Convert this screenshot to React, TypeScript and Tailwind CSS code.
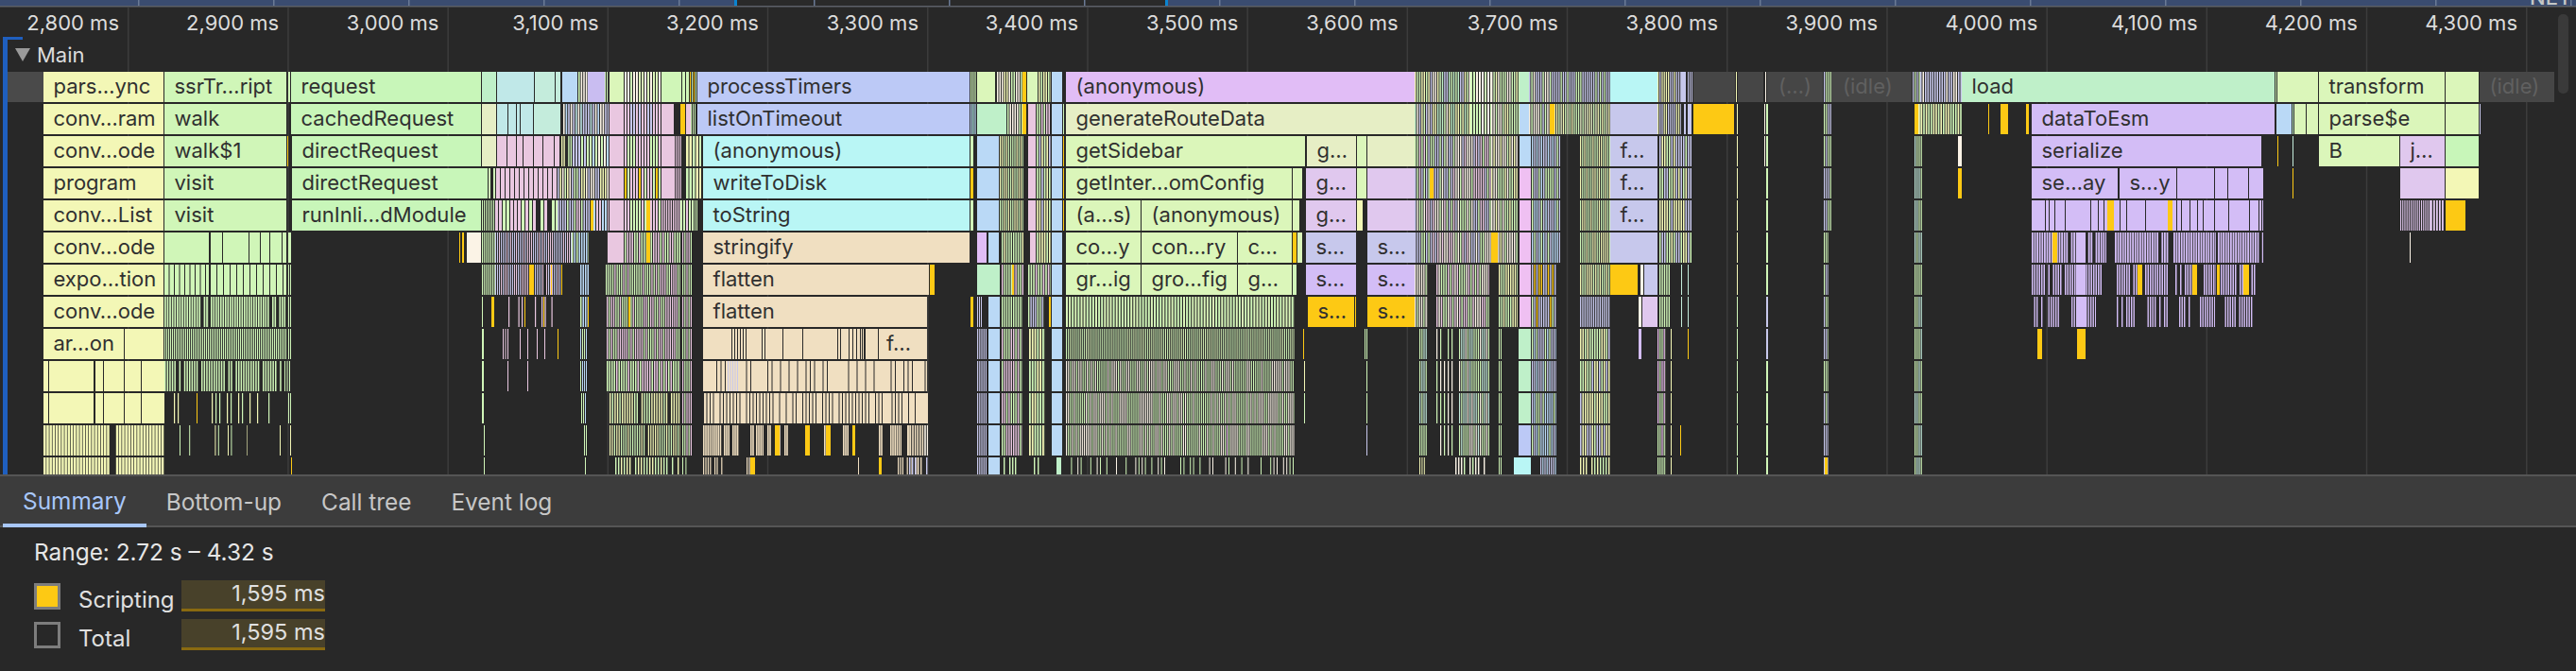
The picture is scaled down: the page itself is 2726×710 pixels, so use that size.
import type { ReactElement } from 'react';

const D = '#2a2a2a';
const Y = '#f3f7b6';
const G = '#d0f6b8';
const GL = '#dbf6ba';
const R = '#c8f6b9';
const M = '#bff0c9';
const T = '#c4ecdc';
const TB = '#c0e8e8';
const B = '#bad9f6';
const L = '#c7c8ec';
const LV = '#c9bdf1';
const P = '#e9c7e0';
const PK = '#efc0f2';
const W = '#fbf3e6';
const O = '#f0dfc1';
const C = '#b9f6f5';
const PB = '#bcc9f6';
const PP = '#e1bdf6';
const OL = '#e6eec5';
const V = '#d3bdf6';
const VL = '#e0c8ee';
const A = '#fdc914';
const IDLE = '#464646';

const ROW_H = 32;
const rowY = (i: number) => 76 + i * 34;
const GRID = Array.from({ length: 16 }, (_, i) => 135 + 169.2 * i);
const TIMES = ['2,800', '2,900', '3,000', '3,100', '3,200', '3,300', '3,400', '3,500', '3,600', '3,700', '3,800', '3,900', '4,000', '4,100', '4,200', '4,300'];

// small seeded generator so the hatching stays the same on every load
let seed = 1337;
function rnd() {
  seed = (seed + 0x6d2b79f5) | 0;
  let t = Math.imul(seed ^ (seed >>> 15), 1 | seed);
  t = (t + Math.imul(t ^ (t >>> 7), 61 | t)) ^ t;
  return ((t ^ (t >>> 14)) >>> 0) / 4294967296;
}

type Bar = { x: number; w: number; c: string };
type Label = { x: number; t: string; c?: string };
type Row = { bars: Bar[]; labels: Label[] };

const rows: Row[] = Array.from({ length: 13 }, () => ({ bars: [], labels: [] }));

// solid block, optionally labelled
function s(r: number, x0: number, x1: number, c: string, t?: string, tc?: string) {
  rows[r].bars.push({ x: x0, w: x1 - x0, c });
  if (t) rows[r].labels.push({ x: x0 + 10.5, t, c: tc });
}

// run of thin slices
function h(r: number, x0: number, x1: number, pal: string[], pitch = 3, density = 1, w = pitch - 1) {
  for (let x = x0; x < x1; x += pitch) {
    const c = pal[Math.floor(rnd() * pal.length)];
    if (rnd() < density) rows[r].bars.push({ x, w: Math.min(w, x1 - x), c });
  }
}

function many(from: number, to: number, fn: (r: number) => void) {
  for (let r = from; r <= to; r++) fn(r);
}

// --- yellow column
s(0, 46, 173, Y, 'pars…ync');
s(1, 46, 173, Y, 'conv…ram');
s(2, 46, 173, Y, 'conv…ode');
s(3, 46, 173, Y, 'program');
s(4, 46, 173, Y, 'conv…List');
s(5, 46, 173, Y, 'conv…ode');
s(6, 46, 173, Y, 'expo…tion');
s(7, 46, 173, Y, 'conv…ode');
s(8, 46, 131, Y, 'ar…on');
s(8, 132, 173, Y);
many(9, 10, r => {
  s(r, 46, 51, Y);
  s(r, 52, 99, Y);
  s(r, 101, 109, Y);
  s(r, 110, 131, Y);
  s(r, 132, 149, Y);
  s(r, 150, 174, Y);
});
many(11, 12, r => {
  seed = 77;
  h(r, 46, 174, [Y], 3.2, 0.9, 2.5);
});

// --- green column
s(0, 174, 303, G, 'ssrTr…ript');
s(0, 305, 307, G);
s(0, 308, 509, R, 'request');
s(1, 174, 303, G, 'walk');
s(1, 308, 509, R, 'cachedRequest');
s(2, 174, 303, G, 'walk$1');
s(2, 304, 305, A);
s(2, 309, 509, R, 'directRequest');
s(3, 174, 303, G, 'visit');
s(3, 309, 516, R, 'directRequest');
s(4, 174, 303, G, 'visit');
s(4, 309, 509, R, 'runInli…dModule');
[[174, 221], [223, 235], [236, 263], [264, 275], [276, 285], [286, 298], [299, 303], [305, 308]].forEach(([a, b]) => s(5, a, b, G));
h(6, 174, 221, [G], 5.5, 0.95, 4.5);
h(6, 223, 303, [G], 7, 1, 6);
h(6, 305, 308, [G], 2, 1, 1);
h(7, 174, 221, [G], 2.6, 0.95, 1.7);
h(7, 223, 303, [G], 2.5, 0.96, 1.6);
h(7, 305, 308, [G], 2, 1, 1);
h(8, 174, 303, [G], 2, 1, 1.1);
h(8, 305, 308, [G], 2, 1, 1);
h(9, 174, 298, [G], 2.6, 0.9, 1.5);
h(9, 301, 308, [G], 2.5, 1, 1);
h(10, 176, 300, [G, Y], 4, 0.3, 1.2);
s(10, 208, 209, A);
h(10, 305, 308, [G], 2, 1, 1);
h(11, 190, 262, [G, Y], 3.4, 0.3, 1);
s(11, 296, 297, Y);
s(11, 307, 308, Y);
s(12, 308, 309, A);

// --- busy columns between request and processTimers
s(0, 510, 525, M);
s(0, 526, 565, TB);
s(0, 566, 587, T);
s(0, 588, 593, T);
s(0, 595, 611, B);
h(0, 612, 622, [W, G], 2.6);
s(0, 622, 640, LV);
h(0, 640, 644, [G], 2);
s(0, 645, 660, GL);
h(0, 661, 700, [G, GL, W], 3);
s(0, 700, 718, G);
h(0, 718, 730, [G], 4, 1, 3);
h(0, 730, 737, [G, A], 2);

s(1, 510, 525, OL);
[[526, 537], [538, 546], [547, 550], [551, 564], [565, 593]].forEach(([a, b]) => s(1, a, b, a === 565 ? T : TB));
h(1, 596, 644, [B, L, W, TB], 2.6);
s(1, 645, 660, P);
h(1, 661, 700, [P, L], 3);
s(1, 700, 713, P);
s(1, 720, 725, A);
s(1, 726, 731, P);
h(1, 731, 737, [G], 2);

s(2, 510, 525, OL);
[[526, 536], [537, 546], [547, 553], [554, 564], [565, 574], [575, 586], [587, 592]].forEach(([a, b]) => s(2, a, b, P));
h(2, 594, 606, [Y, G, D], 2.4);
h(2, 606, 644, [B, L, G, W], 3);
s(2, 645, 660, P);
h(2, 661, 700, [P, G], 3);
s(2, 700, 713, P);
h(2, 713, 721, [P], 2.2);
h(2, 726, 742, [G, Y], 3.5);

s(3, 517, 519, G);
s(3, 522, 524, G);
h(3, 525, 590, [P], 5, 1, 4);
h(3, 590, 644, [G, L, Y, W], 2.5);
s(3, 645, 660, P);
h(3, 661, 700, [P, G, A], 3);
s(3, 700, 713, P);
h(3, 713, 721, [P], 2.2);
h(3, 726, 742, [G, Y], 3.5);

h(4, 510, 524, [G], 2, 1, 1);
h(4, 524, 590, [P, G], 4, 0.9, 3);
s(4, 625, 628, A);
h(4, 590, 624, [P, G, L], 2.5);
h(4, 628, 644, [P, B], 3);
s(4, 645, 660, P);
h(4, 661, 684, [P, G], 3);
s(4, 684, 688, A);
h(4, 688, 700, [P, G], 3);
h(4, 700, 720, [P], 2.4);
h(4, 720, 735, [P, G], 3);
h(4, 735, 738, [G], 2);

s(5, 486, 487, A);
s(5, 489, 491, A);
s(5, 494, 509, W);
h(5, 510, 524, [G], 2.2);
h(5, 524, 605, [P, L], 2, 1, 1);
h(5, 605, 623, [B, G], 2.5);
s(5, 643, 660, P);
h(5, 661, 720, [G, P], 2.5);
s(5, 684, 688, A);
h(5, 722, 733, [P, G], 2.2);

h(6, 510, 524, [G], 2.2);
h(6, 524, 596, [P, L], 2, 0.95, 1);
s(6, 560, 565, A);
s(6, 583, 584, A);
s(6, 594, 595, A);
h(6, 614, 623, [B, G], 2.5);
h(6, 641, 720, [G, P], 2.3);
h(6, 722, 733, [P, G], 2.2);

s(7, 510, 511, G);
s(7, 520, 523, A);
h(7, 524, 594, [P], 3.5, 0.6, 1.2);
s(7, 555, 556, A);
s(7, 575, 576, A);
h(7, 614, 623, [B, G], 2.5);
s(7, 622, 623, A);
h(7, 642, 720, [G, P], 2.3);
s(7, 665, 667, A);
h(7, 722, 733, [P, G], 2.2);

s(8, 510, 512, G);
h(8, 532, 538, [P], 2.5, 1, 1);
[550, 558, 568, 576].forEach(x => s(8, x, x + 1, P));
s(8, 590, 591, A);
h(8, 614, 621, [B, G], 2);
h(8, 642, 720, [G, P], 2.3);
h(8, 722, 733, [P, G], 2.2);

s(9, 510, 512, G);
s(9, 537, 538, P);
s(9, 558, 559, P);
h(9, 614, 621, [B, G], 2);
h(9, 642, 720, [G, P], 2.5);
h(9, 722, 733, [P, G], 2.2);

s(10, 510, 512, G);
h(10, 615, 621, [B, G], 2);
h(10, 645, 720, [G, Y], 2.6, 0.9, 1.4);
h(10, 722, 733, [P, G], 2.2);

s(11, 512, 513, G);
h(11, 618, 621, [G], 2);
h(11, 645, 720, [G, Y], 2.4, 0.9, 1.2);
h(11, 722, 733, [P, G], 2.2);

s(12, 512, 513, G);
h(12, 619, 621, [G], 2);
h(12, 645, 720, [G, Y], 3, 0.8, 1.4);
h(12, 722, 733, [G], 3.4, 0.8, 1);

// --- processTimers stack
s(0, 738, 1026, PB, 'processTimers');
s(1, 738, 1026, PB, 'listOnTimeout');
s(2, 744, 1026, C, '(anonymous)');
s(3, 744, 1026, C, 'writeToDisk');
s(4, 744, 1026, C, 'toString');
s(5, 744, 1026, O, 'stringify');
s(6, 744, 983, O, 'flatten');
s(6, 984, 989, A);
s(7, 744, 981, O, 'flatten');
s(8, 744, 981, O);
rows[8].labels.push({ x: 938, t: 'f…' });
[[774, 790, 3], [806, 812, 3], [886, 892, 3], [898, 916, 4], [912, 916, 3]].forEach(([a, b, p]) => h(8, a, b, [D], p, 1, 1));
[806, 809, 828, 849, 929].forEach(x => s(8, x, x + 1, D));
s(9, 744, 981, O);
h(9, 758, 980, [D], 4.5, 0.5, 1);
h(9, 770, 782, [L], 2.5, 1, 1);
s(10, 744, 983, O);
h(10, 744, 983, [D], 3.5, 0.75, 1);
[[744, 772], [775, 782], [794, 798], [800, 808], [812, 816], [822, 826], [830, 834], [872, 878], [892, 898], [930, 934], [942, 954], [958, 964]].forEach(([a, b]) => h(11, a, b, [O], 2.2, 0.9, 1.6));
s(11, 820, 825, A);
s(11, 852, 857, A);
s(11, 874, 879, A);
s(11, 902, 905, A);
h(11, 960, 982, [O, W], 2.6, 0.9, 1.6);
[[744, 768], [790, 796], [818, 819], [908, 909], [950, 972]].forEach(([a, b]) => h(12, a, b, [O], 2.4, 0.8, 1.2));
s(12, 794, 799, A);
s(12, 930, 933, A);
h(12, 962, 982, [O, L], 3, 0.8, 1.4);

// --- columns between processTimers and (anonymous)
h(0, 1027, 1033, [G], 2.2);
s(0, 1034, 1053, GL);
h(0, 1055, 1082, [G, W, Y], 2.5);
s(0, 1082, 1086, A);
s(0, 1087, 1098, GL);
h(0, 1099, 1112, [G, Y, W], 2.5);
s(0, 1113, 1124, B);
h(1, 1027, 1033, [C, B], 2.2);
s(1, 1034, 1065, M);
h(1, 1066, 1082, [W, G], 2.5);
s(1, 1082, 1086, A);
s(1, 1088, 1096, P);
h(1, 1097, 1112, [P, G], 2.5);
s(1, 1113, 1124, B);
s(1, 1125, 1126, G);
many(2, 4, r => {
  s(r, 1027, 1030, r === 3 ? A : G);
  s(r, 1034, 1057, B);
  h(r, 1058, 1083, [Y, G], 2.2);
  s(r, 1088, 1096, P);
  h(r, 1097, 1112, [G, Y, L], 2.6);
  s(r, 1113, 1124, B);
  s(r, 1125, 1126, A);
});
s(5, 1034, 1044, PP);
s(5, 1046, 1057, B);
h(5, 1060, 1084, [G, Y], 2.4);
s(5, 1090, 1096, P);
h(5, 1097, 1112, [G, Y], 2.6);
s(5, 1113, 1124, B);
s(6, 1034, 1058, M);
h(6, 1060, 1084, [G, P], 2.4);
s(6, 1071, 1073, A);
h(6, 1088, 1112, [P, G], 2.6);
s(6, 1113, 1124, B);
s(7, 1027, 1030, A);
h(7, 1034, 1040, [L], 2);
s(7, 1046, 1058, B);
h(7, 1060, 1082, [G], 2.4);
h(7, 1088, 1105, [G, L], 2.4);
s(7, 1110, 1112, A);
s(7, 1113, 1124, B);
many(8, 11, r => {
  h(r, 1034, 1044, [L], 2.2);
  s(r, 1046, 1058, B);
  h(r, 1060, 1082, [G, P], 2.4);
  h(r, 1089, 1106, [G, Y], 2.8);
  s(r, 1113, 1124, B);
});
h(12, 1034, 1044, [L], 2.2);
s(12, 1046, 1058, B);
h(12, 1062, 1076, [G], 3, 0.7, 1.4);
h(12, 1090, 1100, [G], 4, 0.6, 1.4);
s(12, 1118, 1123, M);

// --- generateRouteData stack
s(0, 1128, 1497, PP, '(anonymous)');
s(1, 1128, 1497, OL, 'generateRouteData');
s(2, 1128, 1381, GL, 'getSidebar');
s(2, 1383, 1435, OL, 'g…');
s(2, 1436, 1446, GL);
s(2, 1447, 1497, OL);
s(3, 1128, 1367, GL, 'getInter…omConfig');
s(3, 1368, 1378, GL);
s(3, 1382, 1435, VL, 'g…');
s(3, 1436, 1446, GL);
s(3, 1447, 1497, VL);
s(4, 1128, 1207, GL, '(a…s)');
s(4, 1208, 1367, GL, '(anonymous)');
s(4, 1368, 1375, GL);
s(4, 1382, 1435, VL, 'g…');
s(4, 1436, 1442, Y);
s(4, 1447, 1497, VL);
s(5, 1128, 1207, GL, 'co…y');
s(5, 1208, 1309, GL, 'con…ry');
s(5, 1310, 1367, GL, 'c…');
s(5, 1368, 1372, A);
s(5, 1373, 1378, GL);
s(5, 1382, 1435, L, 's…');
s(5, 1447, 1497, L, 's…');
s(6, 1128, 1207, GL, 'gr…ig');
s(6, 1208, 1309, GL, 'gro…fig');
s(6, 1310, 1367, GL, 'g…');
s(6, 1368, 1372, G);
s(6, 1382, 1435, V, 's…');
s(6, 1447, 1497, V, 's…');
h(7, 1128, 1370, [G, GL], 3.1, 1, 2);
s(7, 1384, 1433, A, 's…');
s(7, 1434, 1435, A);
s(7, 1447, 1497, A, 's…');
h(8, 1128, 1370, [G, GL], 2.1, 1, 1);
s(8, 1379, 1380, A);
h(8, 1444, 1448, [G], 2, 1, 1);
h(9, 1128, 1370, [G, W], 2.2, 1, 1.1);
s(9, 1380, 1381, Y);
s(9, 1446, 1447, G);
h(10, 1128, 1370, [W, G], 2.1, 1, 1.1);
s(10, 1380, 1381, G);
s(10, 1446, 1447, G);
h(11, 1128, 1370, [W, G], 2.1, 1, 1.1);
s(11, 1298, 1299, PK);
s(11, 1446, 1447, L);
h(12, 1130, 1370, [W, G], 3.4, 0.55, 1);

// --- busy stretch after (anonymous)
many(0, 1, r => {
  h(r, 1497, 1556, [G, L, W, Y, M], 2.4);
  h(r, 1556, 1578, [W, G], 3, 1, 2);
  h(r, 1578, 1608, [W, G, Y], 2.4);
  s(r, 1608, 1618, r === 0 ? M : B);
  h(r, 1618, 1640, [L, G, W], 2.4);
  h(r, 1640, 1704, r === 0 ? [L, L, G] : [Y, G, OL], 2.3);
});
s(1, 1640, 1645, A);
many(2, 5, r => {
  h(r, 1497, 1578, [G, W, P, L], 2.4);
  h(r, 1578, 1606, [W, G, Y], 2.4);
  s(r, 1608, 1620, r === 2 ? B : PK);
  h(r, 1621, 1651, [G, B, L], 2.4);
  h(r, 1672, 1704, [Y, G], 2.2);
  s(r, 1704, 1754, L, r < 5 ? 'f…' : undefined);
  h(r, 1756, 1791, [G, Y, L], 2.5);
});
s(3, 1513, 1517, A);
s(5, 1578, 1585, A);
s(6, 1704, 1733, A);
s(6, 1736, 1739, W);
s(6, 1740, 1754, L);
s(7, 1734, 1737, W);
s(7, 1738, 1754, VL);
s(8, 1734, 1737, V);
many(6, 7, r => {
  h(r, 1497, 1511, [G, W], 2.3);
  h(r, 1520, 1576, [G, W, P], 2.4);
  h(r, 1586, 1606, [G, Y], 2.4);
  s(r, 1608, 1620, PK);
  h(r, 1621, 1647, [G, A, L], 2.4);
  h(r, 1672, 1704, r === 6 ? [G, Y] : [L], 2.3);
  h(r, 1756, 1767, [G], 2.4);
  s(r, 1779, 1780, T);
  s(r, 1786, 1787, T);
});
many(8, 11, r => {
  h(r, 1502, 1510, [T, G], 2.2);
  h(r, 1520, 1540, [G, W], 4, 0.7, 1.2);
  h(r, 1544, 1577, [G, W, T], 2.2);
  h(r, 1586, 1590, [G], 2);
  s(r, 1607, 1620, r === 11 ? PB : M);
  h(r, 1621, 1647, [G, B, L], 2.3);
  h(r, 1672, 1704, [G, Y, L], 2.5);
  h(r, 1754, 1763, [G, PK], 2.2);
  s(r, 1768, 1769, Y);
});
s(8, 1786, 1787, A);
s(11, 1778, 1779, A);
h(12, 1502, 1509, [Y], 2.4, 0.8, 1);
h(12, 1534, 1577, [G, W], 3, 0.8, 1.4);
h(12, 1586, 1590, [G], 2);
s(12, 1602, 1620, C);
h(12, 1630, 1647, [B, L], 2.2);
h(12, 1672, 1704, [G, Y], 3, 0.8, 1.4);
h(12, 1754, 1763, [G], 2.2);
s(12, 1768, 1769, Y);

s(0, 1704, 1754, C);
s(1, 1704, 1754, L);
h(0, 1754, 1779, [Y, L], 2.2);
s(0, 1779, 1784, L);
h(0, 1786, 1791, [L], 2);
h(1, 1754, 1779, [Y, L], 2.2);
s(1, 1782, 1784, L);
s(1, 1786, 1790, L);
s(1, 1792, 1835, A);

// sparse far-right columns
s(0, 8, 46, '#4a4a4a');
s(0, 1792, 1836, IDLE);
s(0, 1837, 1838, Y);
s(0, 1839, 1866, IDLE);
s(0, 1868, 1869, W);
s(0, 1870, 1929, IDLE);
h(0, 1930, 1938, [G, L], 2.2);
s(0, 1938, 2023, IDLE);
rows[0].labels.push({ x: 1882, t: '(…)', c: '#606060' }, { x: 1950, t: '(idle)', c: '#606060' });
many(1, 12, r => {
  s(r, 1838, 1839, r > 6 ? G : Y);
  if (r < 3) s(r, 1867, 1868, W);
  s(r, 1869, 1871, r === 7 || r === 8 ? L : G);
  h(r, 1930, r < 5 ? 1938 : 1935, [G, L], 2.2);
  h(r, 2026, 2034, [G, T], 2.2);
});
s(12, 1931, 1934, A);
s(1, 2026, 2030, A);

h(0, 2024, 2032, [G, L], 2.2);
h(0, 2032, 2076, [L, L, W], 2.5);
h(1, 2030, 2076, [Y, G], 2.6);
s(2, 2072, 2076, W);
s(3, 2072, 2076, A);

// --- load / dataToEsm stack
s(0, 2076, 2407, M, 'load');
s(0, 2408, 2409, G);
s(0, 2410, 2453, GL);
s(0, 2454, 2587, GL, 'transform');
s(0, 2588, 2623, GL);
s(0, 2624, 2703, IDLE, '(idle)', '#606060');
s(1, 2104, 2105, A);
s(1, 2117, 2125, A);
s(1, 2144, 2147, A);
s(1, 2150, 2407, V, 'dataToEsm');
s(1, 2409, 2425, B);
s(1, 2426, 2427, M);
s(1, 2428, 2440, GL);
s(1, 2441, 2453, GL);
s(1, 2454, 2587, GL, 'parse$e');
s(1, 2588, 2623, GL);
s(1, 2624, 2625, L);
s(2, 2150, 2393, V, 'serialize');
s(2, 2410, 2411, A);
s(2, 2426, 2427, T);
s(2, 2454, 2539, GL, 'B');
s(2, 2540, 2587, VL, 'j…');
s(2, 2588, 2623, R);
[[2150, 2241, 'se…ay'], [2243, 2303, 's…y'], [2304, 2343, ''], [2344, 2357, ''], [2358, 2379, ''], [2380, 2395, '']].forEach(([a, b, t]) => s(3, a as number, b as number, V, t as string));
s(3, 2426, 2427, A);
s(3, 2540, 2587, VL);
s(3, 2588, 2623, Y);
s(4, 2150, 2395, V);
[2164, 2168, 2174, 2185, 2212, 2220, 2226, 2243, 2250, 2270, 2303, 2308, 2317, 2325, 2331, 2343, 2358, 2380, 2390, 2393].forEach(x => s(4, x, x + 1, D));
s(4, 2230, 2237, A);
s(4, 2294, 2299, A);
h(4, 2540, 2572, [VL], 2.2, 0.95, 1.1);
h(4, 2572, 2587, [VL], 3, 1, 1.8);
s(4, 2588, 2609, A);
[[2150, 2229], [2238, 2295], [2300, 2345], [2347, 2395]].forEach(([a, b]) => h(5, a, b, [V], 2.6, 0.92, 1.8));
s(5, 2172, 2177, A);
s(5, 2197, 2207, V);
s(5, 2550, 2551, W);
[[2150, 2227], [2240, 2295], [2302, 2345], [2350, 2387]].forEach(([a, b]) => h(6, a, b, [V], 2.5, 0.85, 1.5));
s(6, 2197, 2207, V);
s(6, 2262, 2267, A);
s(6, 2320, 2325, A);
s(6, 2346, 2349, A);
s(6, 2374, 2380, A);
[[2150, 2180], [2192, 2218], [2240, 2260], [2270, 2295], [2306, 2320], [2328, 2344], [2352, 2387]].forEach(([a, b]) => h(7, a, b, [V], 2.5, 0.8, 1.4));
s(7, 2198, 2207, V);
s(8, 2156, 2161, A);
s(8, 2198, 2207, A);

function FlameRow({ row, i }: { row: Row; i: number }) {
  const y = rowY(i);
  const els: ReactElement[] = [];
  row.bars.forEach((b, k) => {
    const height = y + ROW_H > 502 ? 502 - y : ROW_H;
    els.push(<rect key={k} x={b.x} y={y} width={b.w} height={height} fill={b.c} />);
  });
  return (
    <g>
      {els}
      {row.labels.map(l => (
        <text key={`${l.x}-${l.t}`} x={l.x} y={y + 23} fill={l.c ?? '#303030'} fontSize={22}>
          {l.t}
        </text>
      ))}
    </g>
  );
}

function Overview() {
  const ticks = Array.from({ length: 19 }, (_, i) => 146 + 143 * i);
  return (
    <g>
      <rect x={0} y={0} width={2726} height={7} fill="#3a4c70" />
      <rect x={779} y={0} width={455} height={7} fill="#2a2a2a" />
      {ticks.map(x => (
        <rect key={x} x={x} y={0} width={1.5} height={6} fill="#6a7a95" />
      ))}
      <rect x={777} y={0} width={3} height={6} fill="#0a84d0" />
      <rect x={1233} y={0} width={3} height={6} fill="#0a84d0" />
      <text x={2677} y={5} fill="#c4c7c5" fontSize={22} fontWeight={500}>
        NET
      </text>
      <rect x={0} y={6} width={2726} height={1.5} fill="#5c6068" />
    </g>
  );
}

function FlameChart() {
  return (
    <svg width={2726} height={502} className="block shrink-0">
      <rect width={2726} height={502} fill="#282828" />
      <Overview />
      {GRID.map(x => (
        <rect key={x} x={x} y={8} width={1.5} height={494} fill="#3c3c3c" />
      ))}
      {GRID.map((x, i) => (
        <text key={x} x={x - 9} y={32} textAnchor="end" fill="#dcdcdc" fontSize={22}>
          {TIMES[i]} ms
        </text>
      ))}
      <rect x={3} y={39} width={5} height={463} fill="#1f5fbf" />
      <rect x={3} y={39} width={21} height={3} fill="#1f5fbf" />
      <path d="M16 51 L32 51 L24 65 Z" fill="#9a9a9a" />
      <text x={39} y={66} fill="#dcdcdc" fontSize={22}>
        Main
      </text>
      {rows.map((row, i) => (
        <FlameRow key={i} row={row} i={i} />
      ))}
      <rect x={2707} y={15} width={11} height={84} rx={5} fill="#3a3a3a" />
    </svg>
  );
}

const TABS = ['Summary', 'Bottom-up', 'Call tree', 'Event log'];

function Tabs() {
  return (
    <div className="flex h-[56px] shrink-0 border-t-2 border-b-2 border-[#555555] bg-[#3c3c3c] pl-[3px]">
      {TABS.map((t, i) => (
        <div
          key={t}
          className={
            i === 0
              ? 'flex items-center rounded-t-[2px] border-b-[4px] border-[#a8c7fa] px-[21px] pt-[2px] text-[24.4px] text-[#a8c7fa] -mb-[2px]'
              : 'flex items-center px-[21px] pt-[2px] text-[24.4px] text-[#c7c7c7]'
          }
        >
          {t}
        </div>
      ))}
    </div>
  );
}

function MetricRow({ label, swatch }: { label: string; swatch: string }) {
  return (
    <div className="flex h-[33px] items-center">
      <div className={`h-[28px] w-[28px] border-[3px] border-[#7d7d7d] ${swatch}`} />
      <div className="ml-[19px] w-[109px] pt-[8px] text-[24px] leading-none text-[#e0e0e0]">{label}</div>
      <div className="flex h-[33px] w-[152px] justify-end border-b-[3px] border-[#8a6a10] bg-[#48412a] pt-[1px] text-[23.5px] leading-[26px] text-[#e0e0e0]">
        1,595 ms
      </div>
    </div>
  );
}

function Summary() {
  return (
    <div className="flex flex-1 flex-col pl-[36px] pt-[9px]">
      <div className="text-[24.4px] leading-[34px] text-[#e6e6e6]">Range: 2.72 s – 4.32 s</div>
      <div className="mt-[13px] flex flex-col gap-[8px]">
        <MetricRow label="Scripting" swatch="bg-[#fdc914]" />
        <MetricRow label="Total" swatch="bg-transparent" />
      </div>
    </div>
  );
}

export default function App() {
  return (
    <div className="flex h-[710px] w-[2726px] flex-col overflow-hidden bg-[#282828] font-[family-name:Inter,sans-serif]">
      <FlameChart />
      <Tabs />
      <Summary />
    </div>
  );
}
